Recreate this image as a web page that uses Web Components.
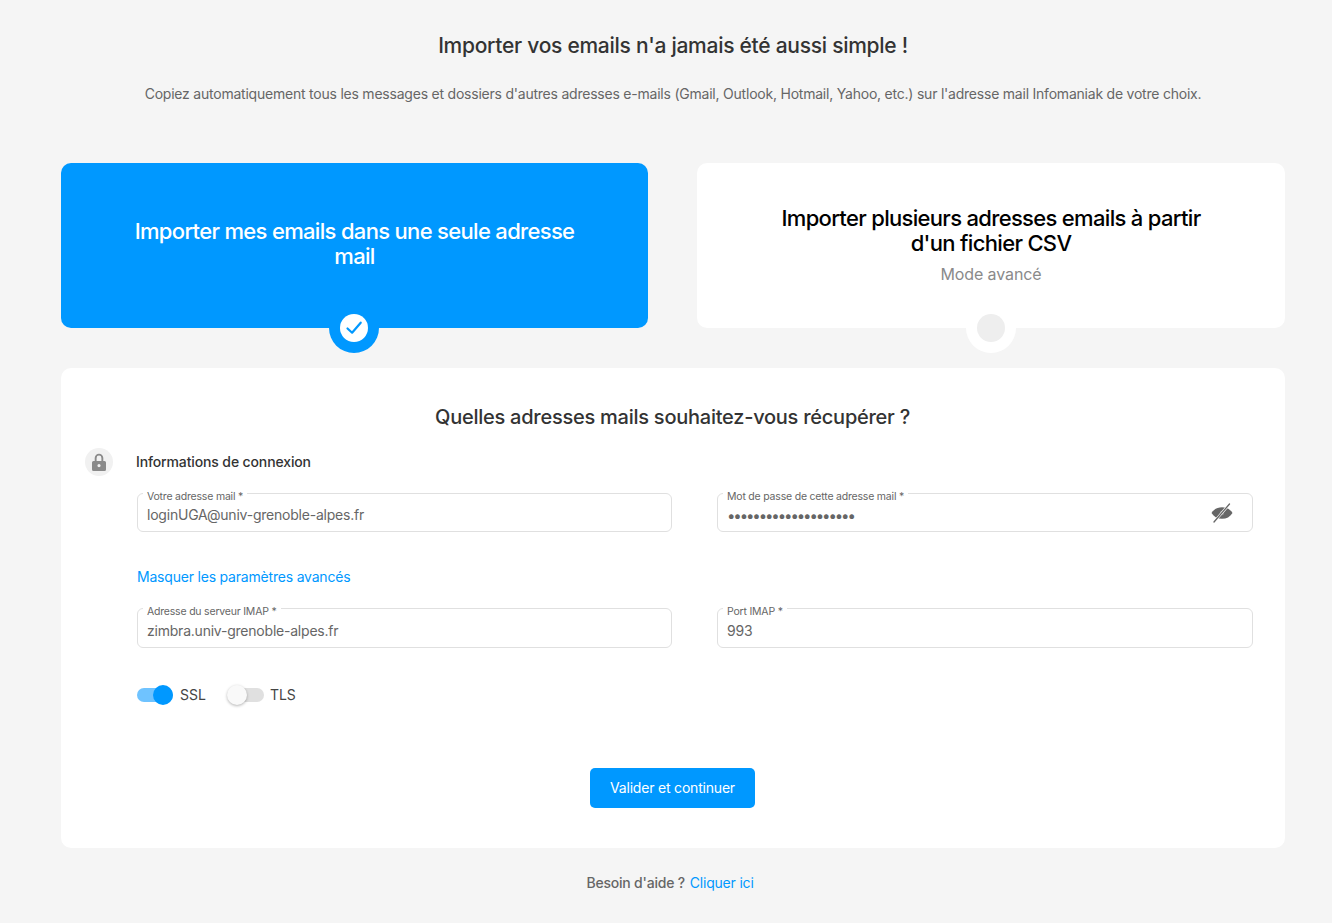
<!DOCTYPE html>
<html lang="fr">
<head>
<meta charset="utf-8">
<title>Importer vos emails</title>
<style>
  html, body { margin: 0; padding: 0; background: #f5f5f5; }
  body { font-family: Inter, "Liberation Sans", sans-serif; color: #333; }
</style>
</head>
<body>
<import-page></import-page>

<script>
class ChoiceCard extends HTMLElement {
    constructor(){
        super();
        this.attachShadow({ mode: 'open' });
        this.shadowRoot.innerHTML = `
        <style>
            :host { display: block; position: relative; height: 165px; border-radius: 10px; background: #fff; color: #000; }
            :host([selected]) { background: #0098ff; color: #fff; }
            .body { height: 100%; box-sizing: border-box; padding: 0 70px 1px; display: flex; flex-direction: column; align-items: center; justify-content: center; text-align: center; }
            :host([selected]) .body { padding-bottom: 3px; }
            .title { font-size: 22px; line-height: 25px; font-weight: 500; letter-spacing: -0.68px; }
            .sub { font-size: 16px; line-height: 20px; color: #8a8a8a; margin-top: 8px; letter-spacing: -0.1px; }
            .mark { position: absolute; left: calc(50% - 25.5px); top: 140px; width: 50px; height: 50px; border-radius: 50%; background: #fff; }
            :host([selected]) .mark { background: #0098ff; }
            .dot { position: absolute; left: 11px; top: 11px; width: 28px; height: 28px; border-radius: 50%; background: #eee; }
            :host([selected]) .dot { background: #fff; }
            svg { position: absolute; left: 11px; top: 11px; width: 28px; height: 28px; display: none; }
            :host([selected]) svg { display: block; }
        </style>
        <div class="body">
            <div class="title"><slot></slot></div>
            <div class="sub"><slot name="sub"></slot></div>
        </div>
        <div class="mark">
            <div class="dot"></div>
            <svg viewBox="0 0 28 28" fill="none" stroke="#0098ff" stroke-width="2.2" stroke-linecap="round" stroke-linejoin="round"><path d="M7.5 14.5l4.6 4.2 8.6-10"/></svg>
        </div>`;
    }
    connectedCallback(){
        if (!this.querySelector('[slot=sub]')) {
            this.shadowRoot.querySelector('.sub').style.display = 'none';
        }
    }
}

class FloatField extends HTMLElement {
    constructor(){
        super();
        this.attachShadow({ mode: 'open' });
        this.shadowRoot.innerHTML = `
        <style>
            :host { display: block; position: relative; height: 39px; box-sizing: border-box; border: 1px solid #e0e0e0; border-radius: 6px; background: #fff; }
            :host([tall]) { height: 40px; }
            :host([tall]) .value { top: 13px; }
            label { position: absolute; left: 5px; top: -4px; padding: 0 4px; background: #fff; font-size: 10.5px; line-height: 13px; color: #666; white-space: nowrap; letter-spacing: -0.2px; }
            .value { position: absolute; left: 9px; top: 12px; font-size: 14px; line-height: 18px; color: #666; white-space: nowrap; letter-spacing: -0.22px; }
            .icon { position: absolute; right: 19px; top: 8px; width: 22px; height: 22px; }
        </style>
        <label></label>
        <div class="value"><slot></slot></div>
        <div class="icon"><slot name="icon"></slot></div>`;
    }
    connectedCallback(){
        this.shadowRoot.querySelector('label').textContent = this.getAttribute('label');
    }
}

class ToggleSwitch extends HTMLElement {
    constructor(){
        super();
        this.attachShadow({ mode: 'open' });
        this.shadowRoot.innerHTML = `
        <style>
            :host { display: inline-flex; align-items: center; gap: 6px; font-size: 14px; color: #444; }
            :host([on]) { gap: 7px; }
            .track { position: relative; width: 36px; height: 14px; border-radius: 7px; background: #e0e0e0; }
            :host([on]) .track { background: #6fc3ff; }
            .knob { position: absolute; left: -1px; top: -3px; width: 20px; height: 20px; border-radius: 50%; background: #f9f9f9; box-shadow: 0 1px 3px rgba(0,0,0,.3); }
            :host([on]) .knob { left: 16px; background: #0098ff; box-shadow: none; }
            span { margin-top: -2px; }
        </style>
        <div class="track"><div class="knob"></div></div>
        <span><slot></slot></span>`;
    }
}

class ImportPage extends HTMLElement {
    constructor(){
        super();
        this.attachShadow({ mode: 'open' });
        this.shadowRoot.innerHTML = `
        <style>
            :host { display: block; box-sizing: border-box; width: 1332px; height: 923px; padding: 0 47px 0 61px; overflow: hidden; }
            h1 { margin: 0; padding-top: 33px; font-size: 21px; line-height: 25px; font-weight: 500; text-align: center; color: #333; letter-spacing: -0.27px; }
            .lead { margin: 27px 0 0; font-size: 14px; line-height: 18px; text-align: center; color: #666; letter-spacing: -0.222px; }
            .cards { display: grid; grid-template-columns: 587px 588px; gap: 49px; margin-top: 60px; }
            .panel { margin-top: 40px; height: 480px; box-sizing: border-box; background: #fff; border-radius: 10px; padding: 36px 32px 0 24px; }
            h2 { margin: 0; padding-left: 7px; font-size: 20px; line-height: 26px; font-weight: 500; text-align: center; color: #333; letter-spacing: -0.25px; }
            .section { display: flex; align-items: center; gap: 23px; margin-top: 18px; height: 28px; font-size: 14px; line-height: 26px; font-weight: 500; color: #333; letter-spacing: -0.13px; }
            .badge { width: 28px; height: 28px; border-radius: 50%; background: #f1f1f1; display: flex; align-items: center; justify-content: center; }
            .grid { display: grid; grid-template-columns: 535px 536px; column-gap: 45px; margin-left: 52px; }
            .grid.first { margin-top: 17px; }
            .link { margin: 36px 0 0 52px; height: 18px; font-size: 14px; line-height: 18px; color: #0098ff; letter-spacing: -0.2px; }
            .grid.second { margin-top: 22px; }
            .toggles { display: flex; gap: 22px; margin: 37px 0 0 52px; height: 20px; align-items: center; }
            .actions { display: flex; justify-content: center; margin-top: 63px; padding-left: 7px; }
            button { width: 165px; height: 40px; padding: 0 0 2px; border: none; border-radius: 5px; background: #0098ff; color: #fff; font: 400 14px Inter, "Liberation Sans", sans-serif; letter-spacing: -0.2px; }
            .help { margin-top: 26px; padding-right: 6px; font-size: 14px; line-height: 18px; text-align: center; color: #666; letter-spacing: -0.2px; }
            .help b { font-weight: 500; }
            .help a { color: #0098ff; margin-left: 1px; }
        </style>
        <h1>Importer vos emails n'a jamais été aussi simple !</h1>
        <p class="lead">Copiez automatiquement tous les messages et dossiers d'autres adresses e-mails (Gmail, Outlook, Hotmail, Yahoo, etc.) sur l'adresse mail Infomaniak de votre choix.</p>
        <div class="cards">
            <choice-card selected>Importer mes emails dans une seule adresse mail</choice-card>
            <choice-card>Importer plusieurs adresses emails à partir d'un fichier CSV<span slot="sub">Mode avancé</span></choice-card>
        </div>
        <div class="panel">
            <h2>Quelles adresses mails souhaitez-vous récupérer ?</h2>
            <div class="section">
                <div class="badge">
                    <svg width="14" height="18" viewBox="0 0 14 18"><path fill="#8a8a8a" fill-rule="evenodd" d="M2.700 8V5a4.300 4.300 0 0 1 8.600 0v3h1.200A1.500 1.500 0 0 1 14 9.500v7a1.500 1.500 0 0 1-1.500 1.500h-11A1.500 1.500 0 0 1 0 16.500v-7A1.500 1.500 0 0 1 1.500 8h1.200zm1.900 0h4.800V5a2.400 2.400 0 0 0-4.800 0v3zM7 11a1.600 1.600 0 1 0 0 3.200A1.600 1.600 0 0 0 7 11z"/></svg>
                </div>
                <span>Informations de connexion</span>
            </div>
            <div class="grid first">
                <float-field label="Votre adresse mail *">loginUGA@univ-grenoble-alpes.fr</float-field>
                <float-field label="Mot de passe de cette adresse mail *">
                    <span style="font-size:15px;letter-spacing:-2.1px;position:relative;top:1px">••••••••••••••••••••</span>
                    <svg slot="icon" width="22" height="22" viewBox="0 0 22 22">
                        <path fill="#666" d="M0.500 11c2.500-4 6-5.800 10.500-5.800S19 7 21.500 11c-2.500 4-6 5.800-10.500 5.800S3 15 0.500 11z"/>
                        <circle cx="11" cy="11" r="2.200" fill="#8a8a8a"/>
                        <path d="M18.500 2L3 20" stroke="#fff" stroke-width="2.600"/>
                        <path d="M18.500 2L3 20" stroke="#666" stroke-width="1.300" stroke-linecap="round"/>
                    </svg>
                </float-field>
            </div>
            <div class="link">Masquer les paramètres avancés</div>
            <div class="grid second">
                <float-field tall label="Adresse du serveur IMAP *">zimbra.univ-grenoble-alpes.fr</float-field>
                <float-field tall label="Port IMAP *">993</float-field>
            </div>
            <div class="toggles">
                <toggle-switch on>SSL</toggle-switch>
                <toggle-switch>TLS</toggle-switch>
            </div>
            <div class="actions"><button>Valider et continuer</button></div>
        </div>
        <div class="help"><b>Besoin d'aide ?</b> <a>Cliquer ici</a></div>`;
    }
}

customElements.define('choice-card', ChoiceCard);
customElements.define('float-field', FloatField);
customElements.define('toggle-switch', ToggleSwitch);
customElements.define('import-page', ImportPage);
</script>
</body>
</html>
